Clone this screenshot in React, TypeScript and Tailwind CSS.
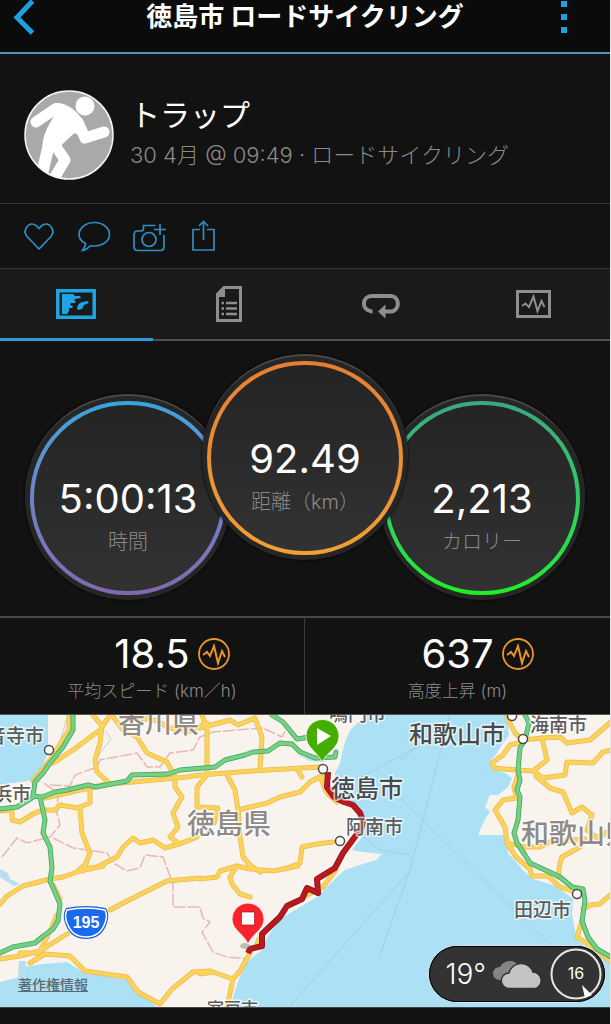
import type { ReactNode } from "react";
import { clsx } from "clsx";

const LAND = [
  "M48 0V38L43 50L33 65L0 70V267L20 262L24 252L43 249L67 247L83 257L133 266L140 279L150 286L157 292H230L238 266L248 246L262 235L268 221L280 204L317 182L337 162L345 155L363 149L376 145L382 139L362 137L352 135L362 122L364 110L360 97L343 88L334 72L335 58L340 48L344 30L350 15L362 4L364 0Z",
  "M507 0L509 20L503 28L497 38L490 46L492 53L505 58L512 63L508 72L498 80L490 80L485 92L490 97L485 104L478 120L507 120L508 138L523 155L533 164L556 171L573 184L572 200L577 225L590 234L611 248V0Z",
];

const HIGHWAYS = [
  "M73 0V15L63 32L50 48L43 58L35 67L33 81L42 82L55 77L67 75L88 70L96 72L127 66L132 60L168 59L180 55L215 52L225 45L245 40L253 37L268 36L280 28L292 29L300 37L315 43L335 42L336 37",
  "M0 94L17 92L27 86L35 81",
  "M40 82L45 105L43 118L50 132L52 153L50 166L60 189L58 206L53 214L42 222L35 228L13 232L0 238",
  "M272 0L283 7L297 24L310 22",
  "M525 0L529 8L525 25L520 33L518 55L520 65L517 75L520 82L518 105L514 118L517 128L525 140L530 148L543 154L560 162L572 172L583 174L585 186L582 206L588 222L597 234L611 242",
];

const ROADS = [
  "M69 0V15L50 45L33 66",
  "M110 0L100 15L73 35L53 48",
  "M93 0L102 11L100 28L95 45L97 57L107 66",
  "M112 0L123 15L137 22L147 38L167 47L175 62V72L182 82L173 98L178 112L170 122L177 127",
  "M45 83L107 69L133 67L187 62L200 60L267 55L320 52",
  "M0 96L12 95V105L20 107L33 99L42 95H55L60 90L77 93L90 88V73",
  "M80 93L82 118L90 138L83 156",
  "M83 154L97 152L117 142L123 132L133 123L140 128L153 125L165 133L182 128L197 122",
  "M202 0L207 15V60L197 72V92L218 93L214 108",
  "M138 3L155 5L170 13L190 16L207 8",
  "M200 13L230 5L238 10L255 3L262 22L260 53",
  "M227 60L235 75L238 95L240 122L243 142L250 150L260 157",
  "M238 95L267 88L280 82L300 77L310 67L323 60",
  "M297 54L302 62",
  "M320 62L327 78L337 87",
  "M333 127L317 129L302 132L300 148L285 154",
  "M200 164L217 162L220 156L237 151L250 154L273 156L298 151",
  "M237 151L230 162L232 169L240 179L250 182",
  "M335 156L323 172L303 182",
  "M259 224L256 232",
  "M250 238L240 256L233 264L227 292",
  "M200 259L213 257L233 264",
  "M0 189L7 181L23 171L50 164L63 162L80 156L103 151",
  "M78 156L86 149",
  "M110 195L127 186L167 166L200 163",
  "M53 170L60 184M57 200L52 212L40 236",
  "M0 244L20 241L40 236L67 219",
  "M20 238L38 238M30 248L45 239L70 241L85 256L127 262L138 277L160 289L172 274L193 257L210 256",
  "M507 2L515 18L523 25L543 23L560 22L567 28L590 25L611 7",
  "M523 27L510 30L503 40L492 48L494 53L517 55L533 56L547 45L542 23",
  "M533 56L543 63L565 60L567 47L593 48L603 37L611 35",
  "M536 61L550 73L563 77L572 98L582 92L592 100L587 115L597 123L611 115",
  "M518 60L514 72L517 83L503 85L495 95L505 112L507 128L516 142L530 154L532 161L548 161L560 172L572 176",
  "M507 128L525 132L540 132L550 127L585 124",
  "M558 162L560 148L562 142L580 132",
  "M583 194L590 190L600 189L611 179",
  "M582 206L577 222L593 232L611 247",
];

const BORDERS = [
  "M2 142L17 123L27 128L50 122L60 110L57 98L58 78L42 67",
  "M50 70L70 71L75 60L97 52L100 45L137 38L147 52L160 52L170 38L193 35L200 22L213 17L237 15L263 13L282 22L287 12",
  "M53 123L73 133L107 138L115 149L127 156L140 153L145 140L163 142L167 153L173 169V192L200 192L203 203L210 207L202 217L213 237L227 242L248 244",
];

const FERRIES = ["M450 0L410 155L380 240", "M400 83L550 230", "M410 156L290 291", "M355 66L420 30L400 45", "M360 120L380 135L410 140"];

const ROUTE =
  "M328 57L327 72L334 82L344 87L353 90L360 98L363 106L361 114L354 123L343 138L335 153L317 164L318 178L307 173L302 184L287 191L280 202L262 219L262 231L250 234L248 238";

interface MapLabel {
  text: string;
  x: number;
  y: number;
  size: number;
  fill: string;
  anchor?: "start" | "end";
}

const LABELS: MapLabel[] = [
  { text: "香川県", x: 118, y: 18, size: 27, fill: "#8f8a86" },
  { text: "徳島県", x: 187, y: 119, size: 28, fill: "#8f8a86" },
  { text: "和歌山県", x: 521, y: 129, size: 28, fill: "#8f8a86" },
  { text: "徳島市", x: 331, y: 82, size: 24, fill: "#4a4a4a" },
  { text: "和歌山市", x: 409, y: 28, size: 24, fill: "#4a4a4a" },
  { text: "音寺市", x: 44, y: 28, size: 19, fill: "#5c5c5c", anchor: "end" },
  { text: "浜市", x: 31, y: 86, size: 19, fill: "#5c5c5c", anchor: "end" },
  { text: "鳴門市", x: 329, y: 6, size: 19, fill: "#5c5c5c" },
  { text: "海南市", x: 530, y: 17, size: 19, fill: "#5c5c5c" },
  { text: "阿南市", x: 346, y: 119, size: 19, fill: "#5c5c5c" },
  { text: "田辺市", x: 514, y: 202, size: 19, fill: "#5c5c5c" },
  { text: "室戸市", x: 207, y: 300, size: 17, fill: "#5c5c5c" },
];

const TOWNS = [
  [49, 35],
  [323, 54],
  [340, 126],
  [512, 1],
  [523, 24],
  [577, 179],
];

const PULSE = "M5 17L9 14L12 18L16 8L20 25L24 13L27 19";

function Header() {
  return (
    <header className="grid h-[54px] grid-cols-[1fr_auto_1fr] items-start border-b-2 border-[#4f93b5] bg-[#0b0b0b] pr-9 pl-9">
      <button type="button" aria-label="戻る" className="-ml-6 h-10 w-6">
        <svg viewBox="0 0 24 40" className="h-10 w-6" fill="none" stroke="#1ea1e0" strokeWidth="5">
          <path d="M20.500 1L5 17.500L20.500 33" />
        </svg>
      </button>
      <h1 className="text-[26px] leading-[34px] font-bold">徳島市 ロードサイクリング</h1>
      <button type="button" aria-label="メニュー" className="h-10 w-5 justify-self-end">
        <svg viewBox="0 0 20 40" className="h-10 w-5" fill="#1ea1e0">
          <path d="M7 1h6v6H7zM7 14h6v6H7zM7 27h6v6H7z" />
        </svg>
      </button>
    </header>
  );
}

function Avatar() {
  return (
    <svg viewBox="0 0 90 90" className="size-[90px] shrink-0">
      <clipPath id="avatar">
        <circle cx="45" cy="45" r="44" />
      </clipPath>
      <circle cx="45" cy="45" r="44" fill="#a9a9a9" />
      <g clipPath="url(#avatar)" fill="#fff" stroke="#fff" strokeLinecap="round" strokeLinejoin="round">
        <circle cx="61" cy="16" r="9.500" stroke="none" />
        <path d="M31 14C41 13 55 22 58 33L59 45L50 42L35 56L20 60C18 48 24 38 31 26Z" strokeWidth="2" />
        <path d="M12 32L31 19" fill="none" strokeWidth="11" />
        <path d="M54 32L61 48L80 42" fill="none" strokeWidth="11" />
        <path d="M31 55L41 70L29 90" fill="none" strokeWidth="11" />
        <path d="M25 54L18 84" fill="none" strokeWidth="12" />
      </g>
      <circle cx="45" cy="45" r="44" fill="none" stroke="#f4f4f4" strokeWidth="1.500" />
    </svg>
  );
}

function Profile() {
  return (
    <section className="flex items-center gap-4 border-b border-[#343434] px-6 pt-9 pb-[23px]">
      <Avatar />
      <div>
        <h2 className="text-[30px] leading-9">トラップ</h2>
        <p className="mt-1 text-[22px] leading-9 font-light text-[#8a8a8a]">30 4月 @ 09:49 · ロードサイクリング</p>
      </div>
    </section>
  );
}

const ACTIONS: { label: string; icon: ReactNode }[] = [
  {
    label: "いいね",
    icon: <path d="M16 29L4 16.500C-1 10 6 0.500 13 5.500L16 8.500L19 5.500C26 0.500 33 10 28 16.500Z" />,
  },
  {
    label: "コメント",
    icon: <path d="M16.500 2.500C25 2.500 31.500 8 31.500 14.500S25 26 16.500 26C15 26 13.500 26 12.500 25.700C10 28.500 7 30 4.500 30.500C6 28.500 7.500 26.500 7.500 23.500C3.500 21.500 1 18.500 1 14.500C1 8 8 2.500 16.500 2.500Z" />,
  },
  {
    label: "写真を追加",
    icon: (
      <>
        <path d="M22.500 5.500H10.500V8.500Q10.500 11 7.500 11H4.500Q1 11 1 15V26.500Q1 30.500 5 30.500H27.500Q31 30.500 31 26.500V15M27 4V15M21 9.500H33" />
        <circle cx="16" cy="19.500" r="7" />
      </>
    ),
  },
  {
    label: "共有",
    icon: <path d="M12 9.500H5V30H26V9.500H19M15.500 20V1.500M11 6L15.500 1.500L20 6" />,
  },
];

function Actions() {
  return (
    <div className="flex gap-[23px] border-b border-[#343434] px-[23px] py-4">
      {ACTIONS.map((action) => (
        <button key={action.label} type="button" aria-label={action.label} className="size-8">
          <svg viewBox="0 0 32 32" className="size-8 overflow-visible" fill="none" stroke="#2f8fc4" strokeWidth="1.700">
            {action.icon}
          </svg>
        </button>
      ))}
    </div>
  );
}

const TABS: { label: string; icon: ReactNode }[] = [
  {
    label: "地図",
    icon: (
      <>
        <path d="M1.800 6.800H38.200V33.200H1.800Z" fill="none" stroke="currentColor" strokeWidth="3.500" />
        <path d="M6 10H17L19 12H24L25 14L19 15L18 17H20L19 19H15L14 21L17 22L16 24H13V27L11 30H6Z" />
        <path d="M22 21Q24 18 27 18L31 17L33 18L31 20L28 21L26 25L22 26L21 24Z" />
      </>
    ),
  },
  {
    label: "統計",
    icon: (
      <>
        <path d="M15 3.500H31.500V36.500H8.500V10Z" fill="none" stroke="currentColor" strokeWidth="3" />
        <path d="M16 3V13H8V10L15 3Z" />
        <path d="M12.500 19H15M17 19H28M12.500 24.500H15M17 24.500H28M12.500 30H15M17 30H28" stroke="currentColor" strokeWidth="2.500" />
      </>
    ),
  },
  {
    label: "ラップ",
    icon: (
      <>
        <path d="M11.500 27.500H11C-0.500 26 1 12 11 12H29C39.500 12 39.500 27.500 29 27.500H24" fill="none" stroke="currentColor" strokeWidth="4" />
        <path d="M17 27.500L24.500 20.500V34.500Z" />
      </>
    ),
  },
  {
    label: "グラフ",
    icon: (
      <>
        <path d="M3.500 7.500H35.500V32.500H3.500Z" fill="none" stroke="currentColor" strokeWidth="3" />
        <path d="M8 22L11.500 19.500L15 23L19.500 12.500L23.500 27L27.500 17L30.500 23" fill="none" stroke="currentColor" strokeWidth="2" />
      </>
    ),
  },
];

function Tabs() {
  return (
    <div role="tablist" className="grid grid-cols-4 bg-[#1a1a1a]">
      {TABS.map((tab, i) => (
        <button
          key={tab.label}
          type="button"
          role="tab"
          aria-label={tab.label}
          aria-selected={i === 0}
          className={clsx(
            "flex h-[72px] justify-center pt-[15px]",
            i === 0 ? "border-b-3 border-[#2f9bd6] text-[#1ea5e6]" : "border-b-2 border-[#505050] text-[#8e8e8e]"
          )}
        >
          <svg viewBox="0 0 40 40" className="size-10" fill="currentColor">
            {tab.icon}
          </svg>
        </button>
      ))}
    </div>
  );
}

interface GaugeProps {
  value: string;
  label: string;
  ring: string;
  className?: string;
}

function Gauge({ value, label, ring, className }: GaugeProps) {
  return (
    <div className={clsx("size-[206px] shrink-0 rounded-full border-t-2 border-[#484848] bg-[#262626] p-[5px] shadow-[0_0_3px_#000]", className)}>
      <div className={clsx("size-full rounded-full bg-linear-to-b p-1", ring)}>
        <div className="flex size-full flex-col items-center rounded-full bg-linear-to-b from-[#242424] to-[#323232] pt-[70px]">
          <span className="text-[40px] leading-[48px]">{value}</span>
          <span className="text-[20px] leading-[38px] font-light text-[#8a8a8a]">{label}</span>
        </div>
      </div>
    </div>
  );
}

function Gauges() {
  return (
    <section className="flex justify-center pt-[13px] pb-4">
      <Gauge value="5:00:13" label="時間" ring="from-[#3ba3da] to-[#8068b0]" className="mt-10" />
      <Gauge value="92.49" label="距離（km）" ring="from-[#e67e32] to-[#f0a034]" className="relative -mx-[29px] mb-10" />
      <Gauge value="2,213" label="カロリー" ring="from-[#3aa880] to-[#1df01d]" className="mt-10" />
    </section>
  );
}

function Stat({ value, label }: { value: string; label: string }) {
  return (
    <div className="pt-3 pb-2.5 text-center">
      <div className="grid grid-cols-[1fr_auto_1fr] items-center gap-2">
        <span className="col-start-2 text-[40px] leading-[48px]">{value}</span>
        <svg viewBox="0 0 32 32" className="size-8" fill="none" stroke="#e8962e" strokeWidth="1.800">
          <circle cx="16" cy="16" r="15" />
          <path d={PULSE} strokeWidth="2" />
        </svg>
      </div>
      <div className="text-[17px] leading-[26px] font-light text-[#8a8a8a]">{label}</div>
    </div>
  );
}

function Roads({ paths, casing, fill, width }: { paths: string[]; casing: string; fill: string; width: number }) {
  return (
    <g fill="none" strokeLinejoin="round" strokeLinecap="round">
      <path d={paths.join("")} stroke={casing} strokeWidth={width + 1.5} />
      <path d={paths.join("")} stroke={fill} strokeWidth={width} />
    </g>
  );
}

function Weather() {
  return (
    <div className="absolute right-1 bottom-1 flex h-[58px] items-center rounded-full border border-[#d5e6ee] bg-[#333] pr-[3px] pl-4 outline-1 -outline-offset-2 outline-black">
      <span className="text-[28px] font-light">19°</span>
      <svg viewBox="0 0 52 30" className="ml-1.5 h-[30px] w-[52px]">
        <path d="M7 21A6.500 6.500 0 0 1 8 8A11 11 0 0 1 27 7L26 21Z" fill="#858585" />
        <path
          d="M17 29.500A7.500 7.500 0 0 1 17 14A12.500 12.500 0 0 1 41 13A8.500 8.500 0 0 1 43.500 29.500Z"
          fill="#c4c4c4"
          stroke="#333"
          strokeWidth="1.500"
        />
      </svg>
      <svg viewBox="0 0 52 52" className="ml-1.5 size-[52px]">
        <circle cx="26" cy="26" r="24.500" fill="none" stroke="#e6e6e6" strokeWidth="2" />
        <path d="M32 37L42 47L35 50Z" fill="#fff" />
        <text x="26" y="31" textAnchor="middle" fontSize="16" fill="#fff">
          16
        </text>
      </svg>
    </div>
  );
}

function ActivityMap() {
  return (
    <section className="relative h-[293px] border-t border-[#555] bg-[#abe0f5]">
      <svg viewBox="0 0 610 292" preserveAspectRatio="xMidYMid slice" className="h-full w-full">
        <path d={LAND.join("")} fill="#f8f3ec" />
        <path d="M0 154L8 158L10 164L20 169L14 171L6 166L0 162ZM19 246L26 246V262H18Z" fill="#b7dff0" />
        <path d="M293 38L303 42L328 47L310 46Z" fill="#b7dff0" />
        <path d={FERRIES.join("")} fill="none" stroke="#9bd0e8" />
        <path d="M66 5L60 28L66 30M105 16L111 24L97 42M107 66L125 70" fill="none" stroke="#c9cdd2" />
        <path d={BORDERS.join("")} fill="none" stroke="#e8b8b3" strokeWidth="1.500" strokeDasharray="12 2" />
        <Roads paths={ROADS} casing="#ecbb52" fill="#fbd25a" width={3.5} />
        <Roads paths={HIGHWAYS} casing="#3fa35f" fill="#74d184" width={3.5} />
        <path d={ROUTE} fill="none" stroke="#8c1218" strokeWidth="6" strokeLinejoin="round" />
        <path d={ROUTE} fill="none" stroke="#b81a20" strokeWidth="4.500" strokeLinejoin="round" />
        {TOWNS.map(([x, y]) => (
          <circle key={x} cx={x} cy={y} r="4.500" fill="#fff" stroke="#4a4a4a" strokeWidth="1.500" />
        ))}
        {LABELS.map((label) => (
          <text
            key={label.text}
            x={label.x}
            y={label.y}
            fontSize={label.size}
            fill={label.fill}
            textAnchor={label.anchor}
            stroke="#fff"
            strokeOpacity="0.700"
            strokeWidth="3"
            strokeLinejoin="round"
            paintOrder="stroke"
            className="font-medium"
          >
            {label.text}
          </text>
        ))}

        {/* route 195 shield */}
        <path d="M66 193Q86 189 106 193Q110 200 107 208Q102 224 86 224Q70 224 65 208Q62 200 66 193Z" fill="#1c5fd8" />
        <path d="M67 195Q86 191 105 195Q108 201 105 208Q100 222 86 222Q72 222 67 208Q64 201 67 195Z" fill="#1a6af0" stroke="#fff" strokeWidth="1.500" />
        <text x="86" y="213" textAnchor="middle" fontSize="16" fill="#fff" className="font-[Liberation_Sans] font-bold">
          195
        </text>

        <path d="M322 47C318 37 306 33 306 21A16.500 16.500 0 0 1 339 21C339 33 327 37 322 47Z" fill="#43ad00" stroke="#fff" strokeWidth="0.800" />
        <path d="M317 13L331 21L317 30Z" fill="#fff" />
        <ellipse cx="245" cy="231" rx="5" ry="3" fill="#8a8580" opacity="0.500" />
        <path d="M248 229C244 219 232 215 232 204A16 16 0 0 1 264 204C264 215 252 219 248 229Z" fill="#f8232b" stroke="#fff" strokeWidth="0.800" />
        <path d="M241.500 197H254.500V210H241.500Z" fill="#fff" stroke="#b01015" strokeWidth="0.700" />
      </svg>
      <a href="#legal" className="absolute bottom-3 left-[18px] text-sm leading-5 font-medium text-[#5b6a72] underline">
        著作権情報
      </a>
      <Weather />
    </section>
  );
}

export default function App() {
  return (
    <div className="flex min-h-screen flex-col overflow-hidden border-r border-[#e6e6e6] bg-[#121212] font-[Inter,'Noto_Sans_CJK_JP',sans-serif] text-white">
      <Header />
      <Profile />
      <Actions />
      <Tabs />
      <Gauges />
      <section className="grid grid-cols-2 divide-x divide-[#3a3a3a] border-t-2 border-[#484848]">
        <Stat value="18.5" label="平均スピード (km／h)" />
        <Stat value="637" label="高度上昇 (m)" />
      </section>
      <ActivityMap />
      <footer className="flex-1 border-t border-[#444]" />
    </div>
  );
}
